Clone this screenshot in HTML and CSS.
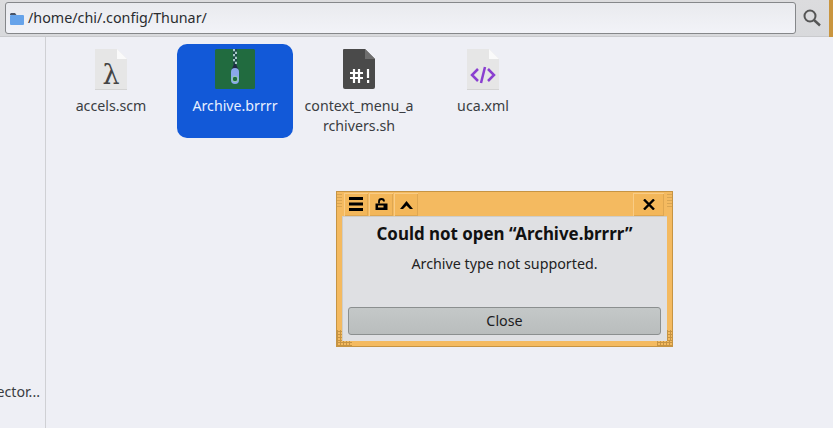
FILE: index.html
```html
<!DOCTYPE html>
<html lang="en">
<head>
<meta charset="utf-8">
<title>Thunar</title>
<link rel="stylesheet" href="styles.css">
</head>
<body>
<div class="app">
  <header class="toolbar">
    <div class="entry">
      <svg class="folder" width="14" height="12" viewBox="0 0 14 12"><path d="M0 1.500C0 .7.7 0 1.500 0H5l1.500 2H0z" fill="#4a5568"/><rect y="2" width="14" height="10" rx="1" fill="#66a3ea"/></svg>
      <span class="path">/home/chi/.config/Thunar/</span>
    </div>
    <svg class="search" width="18" height="18" viewBox="0 0 18 18" fill="none" stroke="#555" stroke-width="2"><circle cx="7" cy="7" r="5.500"/><path d="M11 11L17 16.500" stroke-width="2.400"/></svg>
    <div class="edge"></div>
  </header>
  <main class="main">
    <aside class="side"><span class="side-label">ector...</span></aside>
    <section class="files">
      <div class="file">
        <svg class="icon" width="34" height="42" viewBox="0 0 34 42"><path d="M1 0H23L33 10V40H1z" fill="#e6e6e6"/><path d="M23 0L33 10H23z" fill="#fafafa"/><rect x="1" y="40" width="32" height="1" fill="#d4d4d4"/><text x="17" y="35" class="lambda">λ</text></svg>
        <span class="name">accels.scm</span>
      </div>
      <div class="file selected">
        <svg class="icon" width="42" height="42" viewBox="0 0 42 42"><rect x="1" y="0" width="40" height="40" rx="1.500" fill="#216b3f"/><path d="M19 0h2v2.500h-2zM21 2.500h2V5h-2zM19 5h2v2.500h-2zM21 7.500h2V10h-2zM19 10h2v2.500h-2zM21 12.500h2V15h-2z" fill="#a8c8c6"/><path d="M21 0h2v2.500h-2zM19 2.500h2V5h-2zM21 5h2v2.500h-2zM19 7.500h2V10h-2zM21 10h2v2.500h-2zM19 12.500h2V15h-2z" fill="#1e4a48"/><path d="M20 15h2l2.500 6h-7z" fill="#1f2a44"/><rect x="17" y="19" width="8" height="16" rx="4" fill="#8aa8ea"/><circle cx="21" cy="30" r="2.800" fill="#216b3f" stroke="#9ad4bc" stroke-width="1"/></svg>
        <span class="name">Archive.brrrr</span>
      </div>
      <div class="file">
        <svg class="icon" width="34" height="42" viewBox="0 0 34 42"><path d="M2 0H23L33 10V38a2 2 0 0 1-2 2H3a2 2 0 0 1-2-2V1a1 1 0 0 1 1-1z" fill="#4a4a4a"/><path d="M23 0L33 10H23z" fill="#6e6e6e"/><path d="M8 24h13M8 29h13M12 20v14M17 20v14M26 20v9" stroke="#fff" stroke-width="2.200" fill="none"/><rect x="25" y="31" width="2.200" height="3" fill="#fff"/></svg>
        <span class="name">context_menu_a<wbr>rchivers.sh</span>
      </div>
      <div class="file">
        <svg class="icon" width="34" height="42" viewBox="0 0 34 42"><path d="M1 0H23L33 10V40H1z" fill="#e6e6e6"/><path d="M23 0L33 10H23z" fill="#fafafa"/><rect x="1" y="40" width="32" height="1" fill="#d4d4d4"/><path d="M12 20l-6 6 6 6M22 20l6 6-6 6M19 18l-4 16" fill="none" stroke="#8a3fd0" stroke-width="2.500"/></svg>
        <span class="name">uca.xml</span>
      </div>
    </section>
  </main>
  <div class="dialog">
    <div class="grip grip-tl"></div>
    <div class="grip grip-tr"></div>
    <div class="grip grip-bl-v"></div>
    <div class="grip grip-bl-h"></div>
    <div class="grip grip-br-v"></div>
    <div class="grip grip-br-h"></div>
    <div class="titlebar">
      <button class="tbtn"><svg width="14" height="14" viewBox="0 0 14 14" fill="#000"><rect width="14" height="3"/><rect y="5.500" width="14" height="3"/><rect y="11" width="14" height="3"/></svg></button>
      <button class="tbtn"><svg width="13" height="12" viewBox="0 0 13 12"><path d="M4 5.500V3.500a2.500 2.500 0 0 1 5 0" fill="none" stroke="#000" stroke-width="1.800"/><path d="M0.500 5.500h12V12H.5z" fill="#000"/><rect x="3" y="7.500" width="5.500" height="2" fill="#f4ba60"/></svg></button>
      <button class="tbtn"><svg class="chev" width="13" height="8" viewBox="0 0 13 8"><path d="M6.500 0L13 8H10L6.500 4.500 3 8H0z" fill="#000"/></svg></button>
      <span class="spacer"></span>
      <button class="tbtn tclose"><svg width="12" height="11" viewBox="0 0 12 11" fill="none" stroke="#000" stroke-width="2.400"><path d="M1 .5l10 10M11 .5L1 10.500"/></svg></button>
    </div>
    <div class="body">
      <h1 class="title">Could not open “Archive.brrrr”</h1>
      <p class="message">Archive type not supported.</p>
      <button class="close">Close</button>
    </div>
  </div>
</div>
</body>
</html>
```

FILE: styles.css
```css
* { box-sizing: border-box; }
html, body { margin: 0; height: 100%; }
body { font-family: "Noto Sans", sans-serif; font-size: 14.2px; color: #3a3d42; background: #eeeff5; overflow: hidden; }
.app { position: relative; width: 833px; height: 428px; display: flex; flex-direction: column; }
.toolbar { height: 37px; flex: none; display: flex; align-items: center; padding: 0 0 1px 5px; background: linear-gradient(#dcdcde, #d8d9dc); border-bottom: 1px solid #c9cacd; position: relative; }
.entry { width: 791px; height: 32px; margin-top: 1px; display: flex; align-items: center; gap: 4px; padding: 0 0 0 4px; border: 1px solid #85878a; border-radius: 3px; background: linear-gradient(#e9eaee, #f2f3f8); color: #2a2c30; }
.folder { flex: none; margin-top: 1px; }
.path { font-size: 14.3px; line-height: 20px; }
.search { margin-left: 7px; flex: none; }
.edge { position: absolute; right: 0; top: 0; bottom: -1px; width: 4px; background: #c9953f; }
.main { flex: 1; display: flex; min-height: 0; }
.side { width: 46px; flex: none; border-right: 1px solid #cfd0d4; position: relative; overflow: hidden; }
.side-label { position: absolute; right: 5px; top: 345px; line-height: 20px; white-space: nowrap; }
.files { flex: 1; display: flex; gap: 8px; align-items: flex-start; padding: 7px 0 0 7px; }
.file { width: 116px; display: flex; flex-direction: column; align-items: center; padding: 5px 4px 2px; border-radius: 10px; }
.icon { display: block; margin-bottom: 5px; flex: none; }
.name { display: block; text-align: center; line-height: 20px; max-width: 110px; }
.selected { background: #1259d8; color: #e8efff; height: 94px; }
.lambda { font-family: "DejaVu Serif", serif; font-size: 27px; text-anchor: middle; fill: #444; }
.dialog { position: absolute; left: 336px; top: 191px; width: 337px; height: 156px; background: #f4ba60; border: 1px solid #c69443; display: flex; flex-direction: column; padding: 0 5px 5px; }
.grip { position: absolute; background-image: repeating-linear-gradient(0deg, #c69443 0 1px, transparent 1px 3px), repeating-linear-gradient(90deg, #c69443 0 1px, transparent 1px 3px); }
.grip-tl, .grip-tr { top: 0; width: 5px; height: 15px; background-image: repeating-linear-gradient(180deg, transparent 0 2px, #d9a552 2px 3px); }
.grip-tl { left: 0; }
.grip-tr { right: 0; }
.grip-bl-v, .grip-br-v { bottom: 5px; width: 5px; height: 11px; }
.grip-bl-h, .grip-br-h { bottom: 0; width: 15px; height: 5px; }
.grip-bl-v, .grip-bl-h { left: 0; }
.grip-br-v, .grip-br-h { right: 0; }
.titlebar { height: 24px; flex: none; display: flex; align-items: center; gap: 1px; padding: 1px 0 0 2px; }
.tbtn { width: 24px; height: 23px; padding: 0 0 1px; border: 0; background: #f3b75a; box-shadow: inset 1px 1px 0 #f9cc85, inset -1px -1px 0 #dfa751; display: flex; align-items: center; justify-content: center; }
.chev { margin-top: 2px; }
.spacer { flex: 1; }
.tclose { width: 31px; margin-right: 3px; }
.body { flex: 1; background: #dfe0e3; box-shadow: inset 1px 1px 0 #cfcdc8; display: flex; flex-direction: column; align-items: center; padding: 6px 6px 6px; color: #1d1d1f; }
.title { margin: 0; font-size: 16.9px; font-weight: 700; line-height: 24px; color: #111; }
.message { margin: 8px 0 0; font-size: 14.3px; line-height: 20px; color: #222; }
.close { margin-top: auto; width: 100%; height: 28px; border: 1px solid #8b8f8f; border-radius: 3px; background: linear-gradient(#c4c8c8, #b9bdbd); font: 14.3px "Noto Sans", sans-serif; color: #1d1d1f; padding: 0 0 2px; }
```
